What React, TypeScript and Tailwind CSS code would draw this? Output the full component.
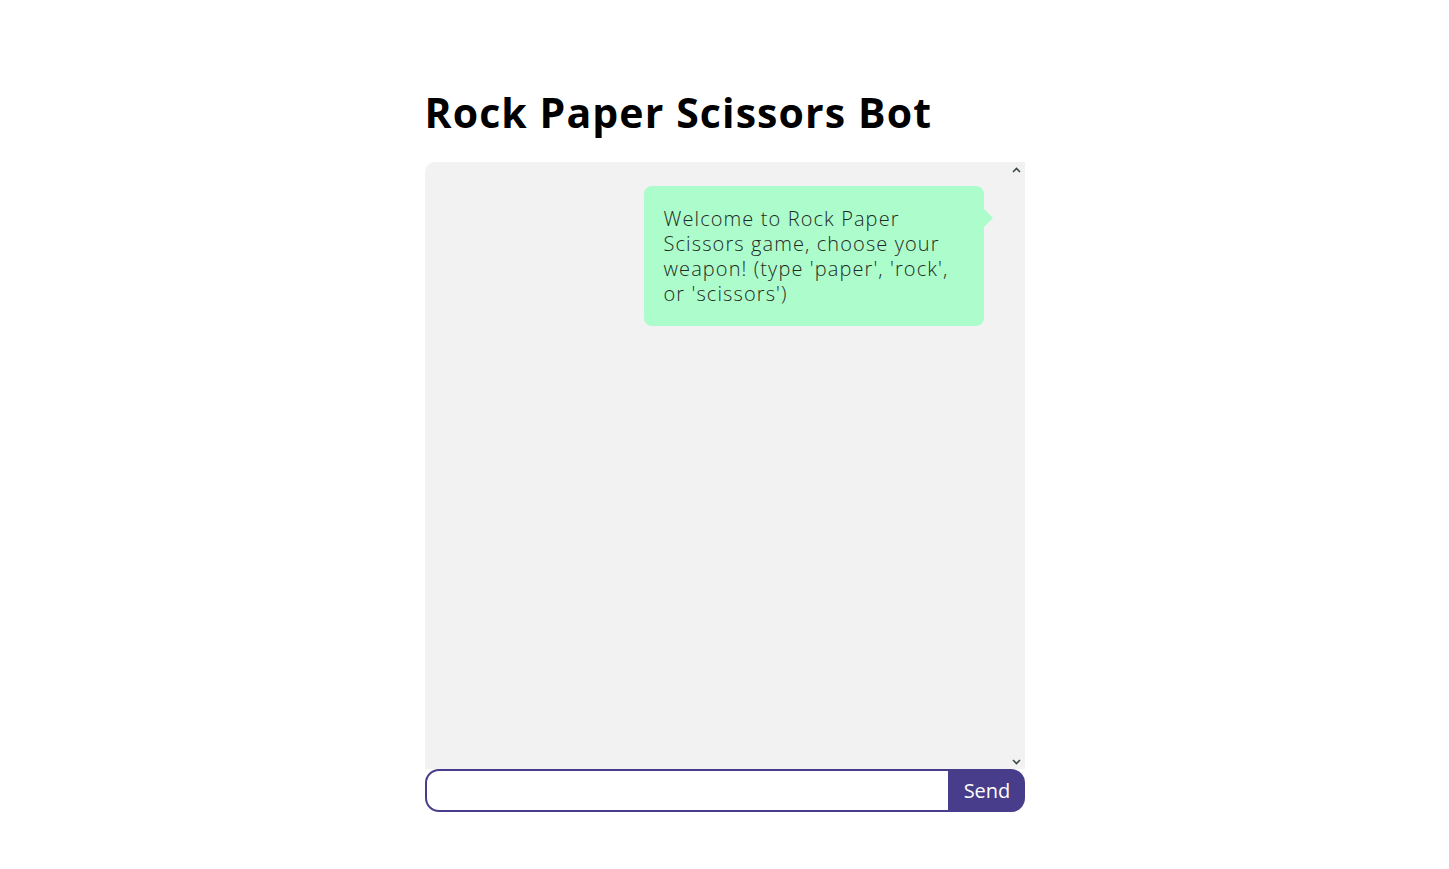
import React from "react";

const ChevronUp = () => (
  <svg width="9" height="6" viewBox="0 0 9 6" className="block">
    <path d="M1 5 L4.5 1.5 L8 5" fill="none" stroke="#3d4a44" strokeWidth="1.6" />
  </svg>
);

const ChevronDown = () => (
  <svg width="9" height="6" viewBox="0 0 9 6" className="block">
    <path d="M1 1 L4.5 4.5 L8 1" fill="none" stroke="#3d4a44" strokeWidth="1.6" />
  </svg>
);

const App = () => {
  const lines = [
    "Welcome to Rock Paper",
    "Scissors game, choose your",
    "weapon! (type 'paper', 'rock',",
    "or 'scissors')",
  ];

  return (
    <div className="min-h-screen bg-white flex justify-center">
      <div className="w-[600px] pt-[86px]">
        <h1
          className="text-[41px] leading-[52px] font-bold text-black tracking-[1.1px]"
          style={{ fontFamily: '"Open Sans", "Liberation Sans", sans-serif' }}
        >
          Rock Paper Scissors Bot
        </h1>
        <div className="mt-[24px] h-[607px] bg-[#f2f2f2] rounded-tl-[10px] flex">
          <div className="flex-1 flex flex-col items-end pt-[24px] pr-[25px]">
            <div className="relative w-[340px] bg-[#adfccb] rounded-[8px] px-[20px] py-[20px]">
              <div
                className="text-[20px] leading-[25px] font-light text-[#1f2a24] tracking-[1.1px]"
                style={{ fontFamily: '"Open Sans", "Lato", sans-serif' }}
              >
                {lines.map(l => (
                  <div key={l} className="whitespace-nowrap">{l}</div>
                ))}
              </div>
              <div className="absolute right-[-9px] top-[23px] w-0 h-0 border-y-[9px] border-y-transparent border-l-[9px] border-l-[#adfccb]" />
            </div>
          </div>
          <div className="w-[16px] flex flex-col items-center justify-between pt-[5px] pb-[4px]">
            <ChevronUp />
            <ChevronDown />
          </div>
        </div>
        <div className="flex h-[43px]">
          <input
            className="flex-1 border-2 border-[#483d8b] rounded-l-[14px] outline-none px-3 text-[18px]"
            style={{ fontFamily: '"Open Sans", sans-serif' }}
          />
          <button
            className="w-[75px] bg-[#483d8b] text-white text-[20px] rounded-r-[14px]"
            style={{ fontFamily: '"Open Sans", sans-serif' }}
          >
            Send
          </button>
        </div>
      </div>
    </div>
  );
};

export default App;
